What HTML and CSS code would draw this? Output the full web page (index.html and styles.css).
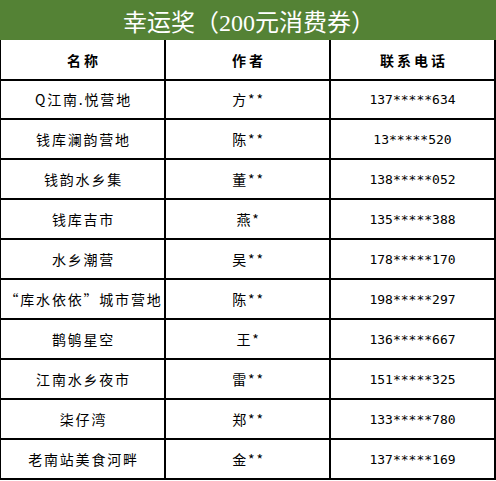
FILE: index.html
```html
<!DOCTYPE html>
<html lang="zh">
<head>
<meta charset="utf-8">
<title>幸运奖</title>
<link rel="stylesheet" href="styles.css">
</head>
<body>
<div class="sheet">
  <div class="title">幸运奖（200元消费券）</div>
  <div class="table">
    <div class="cell head">名称</div>
    <div class="cell head">作者</div>
    <div class="cell head">联系电话</div>

    <div class="cell name">Q江南.悦营地</div>
    <div class="cell author">方**</div>
    <div class="cell phone">137*****634</div>

    <div class="cell name">钱库澜韵营地</div>
    <div class="cell author">陈**</div>
    <div class="cell phone">13*****520</div>

    <div class="cell name">钱韵水乡集</div>
    <div class="cell author">董**</div>
    <div class="cell phone">138*****052</div>

    <div class="cell name">钱库吉市</div>
    <div class="cell author">燕*</div>
    <div class="cell phone">135*****388</div>

    <div class="cell name">水乡潮营</div>
    <div class="cell author">吴**</div>
    <div class="cell phone">178*****170</div>

    <div class="cell name">“库水依依”城市营地</div>
    <div class="cell author">陈**</div>
    <div class="cell phone">198*****297</div>

    <div class="cell name">鹊鸲星空</div>
    <div class="cell author">王*</div>
    <div class="cell phone">136*****667</div>

    <div class="cell name">江南水乡夜市</div>
    <div class="cell author">雷**</div>
    <div class="cell phone">151*****325</div>

    <div class="cell name">柒仔湾</div>
    <div class="cell author">郑**</div>
    <div class="cell phone">133*****780</div>

    <div class="cell name">老南站美食河畔</div>
    <div class="cell author">金**</div>
    <div class="cell phone">137*****169</div>
  </div>
</div>
</body>
</html>
```

FILE: styles.css
```css
html, body {
  margin: 0;
  padding: 0;
  background: #ffffff;
}

.sheet {
  width: 496px;
  font-family: "Noto Sans CJK SC", sans-serif;
  color: #000;
}

.title {
  height: 40px;
  background: #548235;
  color: #ffffff;
  font-family: "Liberation Serif", "Noto Sans CJK SC", serif;
  font-size: 24px;
  display: flex;
  align-items: center;
  justify-content: center;
  padding-left: 2px;
  box-sizing: border-box;
}

.table {
  display: grid;
  grid-template-columns: 165px 165px 165px;
  grid-auto-rows: 40px;
  border-left: 1px solid #000;
}

.cell {
  box-sizing: border-box;
  border-right: 2px solid #000;
  border-bottom: 2px solid #000;
  display: flex;
  align-items: center;
  justify-content: center;
  font-size: 14px;
  white-space: nowrap;
}

.head {
  height: 41px;
  font-weight: bold;
  letter-spacing: 3px;
  padding-left: 3px;
}

.name, .author {
  letter-spacing: 1.8px;
  padding-left: 2px;
}

.phone {
  font-family: "DejaVu Sans Mono", monospace;
  font-size: 13px;
}
```
